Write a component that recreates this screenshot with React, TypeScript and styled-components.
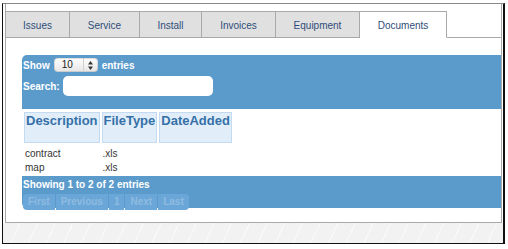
import styled, { createGlobalStyle } from 'styled-components'

const colors = {
  frame: '#111111',
  line: '#a9a9a9',
  tab: '#e0e0e0',
  tabText: '#2f4d7a',
  blue: '#5b9bcc',
  pageBtn: '#6aa7d8',
  pageText: '#8fbbe0',
  headBg: '#e1eefa',
  headBorder: '#c3daf0',
  headText: '#3570a8',
  text: '#333333',
  white: '#ffffff'
}

const GlobalStyle = createGlobalStyle`
  html, body {
    margin: 0;
    padding: 0;
    background: ${colors.white};
  }

  body {
    font-family: 'Liberation Sans', Arial, Helvetica, sans-serif;
  }
`

const Frame = styled.div`
  box-sizing: border-box;
  width: 503px;
  height: 241px;
  margin: 3px 0 0 2px;
  border: 1px solid ${colors.frame};
  border-top-color: #8a8a8a;
  border-right-width: 2px;
  display: flex;
  flex-direction: column;
`

const Window = styled.div`
  margin: 0 1px 0 2px;
  padding-top: 7px;
  border: 1px solid ${colors.line};
  border-top: none;
  background: ${colors.white};
`

const Hatch = styled.div`
  flex: 1;
  background-color: #f2f2f2;
  background-image: repeating-linear-gradient(
    115deg,
    transparent 0 15px,
    rgba(255, 255, 255, 0.6) 15px 16px
  );
`

const TabBar = styled.div`
  display: flex;
  height: 27px;
  box-shadow: inset 0 -1px 0 ${colors.line};
`

const Tab = styled.div<{ $width: number, $active?: boolean }>`
  box-sizing: border-box;
  width: ${({ $width }) => $width}px;
  height: 27px;
  padding-top: 1px;
  display: flex;
  align-items: center;
  justify-content: center;
  border-top: 1px solid ${colors.line};
  border-right: 1px solid ${colors.line};
  border-bottom: 1px solid ${({ $active }) => ($active ? colors.white : colors.line)};
  background: ${({ $active }) => ($active ? colors.white : colors.tab)};
  color: ${colors.tabText};
  font-size: 10px;
`

const Content = styled.div`
  padding: 17px 0 14px 16px;
`

const TopBar = styled.div`
  box-sizing: border-box;
  height: 54px;
  padding: 3px 0 0 1px;
  background: ${colors.blue};
  border-top-left-radius: 5px;
  color: ${colors.white};
  font-size: 10px;
  font-weight: bold;
`

const ShowRow = styled.div`
  display: flex;
  align-items: center;
  gap: 4px;
  height: 14px;
`

const SearchRow = styled.label`
  display: flex;
  align-items: center;
  gap: 3px;
  height: 20px;
  margin-top: 4px;
`

const Select = styled.div`
  box-sizing: border-box;
  width: 44px;
  height: 14px;
  display: flex;
  border-radius: 4px;
  background: linear-gradient(#ffffff, #e6e6e6);
  box-shadow: inset 0 0 0 1px rgba(0, 0, 0, 0.12);
  color: #222;
  font-weight: normal;
  overflow: hidden;
`

const SelectValue = styled.span`
  flex: 1;
  padding-left: 8px;
  line-height: 14px;
`

const SelectArrows = styled.span`
  width: 14px;
  display: flex;
  align-items: center;
  justify-content: center;
  border-left: 1px solid #d0d0d0;
`

const SearchInput = styled.input`
  box-sizing: border-box;
  width: 150px;
  height: 20px;
  border: none;
  border-radius: 5px;
  outline: none;
  background: ${colors.white};
  padding: 0 4px;
`

const Table = styled.table`
  border-collapse: separate;
  border-spacing: 2px 0;
  margin-top: 3px;
`

const Th = styled.th`
  height: 29px;
  padding: 0 1px;
  border: 1px solid ${colors.headBorder};
  background: ${colors.headBg};
  color: ${colors.headText};
  font-size: 13px;
  font-weight: bold;
  text-align: left;
  vertical-align: top;
  line-height: 15px;
`

const Row = styled.tr`
  &:first-child td {
    padding-top: 4px;
  }
`

const Td = styled.td`
  padding: 0 1px;
  color: ${colors.text};
  font-size: 10px;
  line-height: 14px;
`

const Footer = styled.div`
  box-sizing: border-box;
  height: 32px;
  margin-top: 1px;
  padding: 3px 0 0 1px;
  background: ${colors.blue};
  border-bottom-left-radius: 5px;
`

const Info = styled.div`
  color: ${colors.white};
  font-size: 10px;
  font-weight: bold;
  line-height: 12px;
`

const Pager = styled.div`
  display: inline-flex;
  gap: 1px;
  height: 16px;
`

const PageButton = styled.span`
  padding: 0 5px;
  background: ${colors.pageBtn};
  color: ${colors.pageText};
  font-size: 10px;
  font-weight: bold;
  line-height: 16px;

  &:first-child {
    border-radius: 4px 0 0 4px;
  }

  &:last-child {
    border-radius: 0 4px 4px 0;
  }
`

const tabs = [
  { label: 'Issues', width: 64 },
  { label: 'Service', width: 70 },
  { label: 'Install', width: 62 },
  { label: 'Invoices', width: 74 },
  { label: 'Equipment', width: 84 },
  { label: 'Documents', width: 87 }
]

const documents = [
  { description: 'contract', fileType: '.xls', dateAdded: '' },
  { description: 'map', fileType: '.xls', dateAdded: '' }
]

const pages = ['First', 'Previous', '1', 'Next', 'Last']

function UpDown (): JSX.Element {
  return (
    <svg width='5' height='9' viewBox='0 0 5 9'>
      <path d='M2.5 0 L5 3.4 L0 3.4 Z' fill='#333' />
      <path d='M2.5 9 L5 5.6 L0 5.6 Z' fill='#333' />
    </svg>
  )
}

function App (): JSX.Element {
  return (
    <>
      <GlobalStyle />
      <Frame>
        <Window>
          <TabBar>
            {tabs.map((tab) => (
              <Tab key={tab.label} $width={tab.width} $active={tab.label === 'Documents'}>
                {tab.label}
              </Tab>
            ))}
          </TabBar>
          <Content>
            <TopBar>
              <ShowRow>
                <span>Show</span>
                <Select>
                  <SelectValue>10</SelectValue>
                  <SelectArrows><UpDown /></SelectArrows>
                </Select>
                <span>entries</span>
              </ShowRow>
              <SearchRow>
                <span>Search:</span>
                <SearchInput type='text' />
              </SearchRow>
            </TopBar>
            <Table>
              <thead>
                <tr>
                  <Th>Description</Th>
                  <Th>FileType</Th>
                  <Th>DateAdded</Th>
                </tr>
              </thead>
              <tbody>
                {documents.map((doc) => (
                  <Row key={doc.description}>
                    <Td>{doc.description}</Td>
                    <Td>{doc.fileType}</Td>
                    <Td>{doc.dateAdded}</Td>
                  </Row>
                ))}
              </tbody>
            </Table>
            <Footer>
              <Info>Showing 1 to 2 of 2 entries</Info>
              <Pager>
                {pages.map((page) => (
                  <PageButton key={page}>{page}</PageButton>
                ))}
              </Pager>
            </Footer>
          </Content>
        </Window>
        <Hatch />
      </Frame>
    </>
  )
}

export default App
